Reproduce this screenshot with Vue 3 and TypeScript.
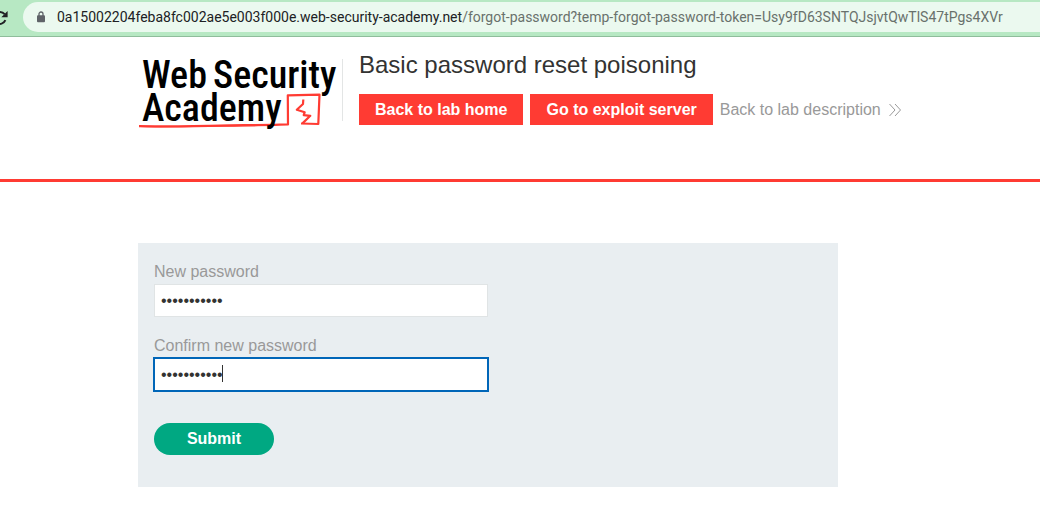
<script setup lang="ts">
import { onMounted, ref } from 'vue'

const host = '0a15002204feba8fc002ae5e003f000e.web-security-academy.net'
const path = '/forgot-password?temp-forgot-password-token=Usy9fD63SNTQJsjvtQwTlS47tPgs4XVr'

const newPassword = ref('carlos12345')
const confirmPassword = ref('carlos12345')
const confirmField = ref<HTMLInputElement | null>(null)

onMounted(() => confirmField.value?.focus())
</script>

<template>
  <div class="page">
    <div class="toolbar">
      <button class="reload" type="button" aria-label="Reload">
        <svg width="16" height="16" viewBox="0 0 16 16">
          <path d="M13.4 10.2A6 6 0 1 1 12.6 4.2" fill="none" stroke="#202124" stroke-width="2" />
          <path d="M15.6 1v6.3H9.3z" fill="#202124" />
        </svg>
      </button>
      <div class="address">
        <svg class="lock" width="8" height="12" viewBox="0 0 8 12">
          <path d="M2 5V3a2 2 0 0 1 4 0v2" fill="none" stroke="#5f6368" stroke-width="1.3" />
          <rect x="0" y="4.2" width="8" height="7" rx="1" fill="#5f6368" />
        </svg>
        <span class="url"><span class="host">{{ host }}</span>{{ path }}</span>
      </div>
    </div>

    <header class="header">
      <div class="container head">
        <a class="logo" href="#" aria-label="Web Security Academy">
          <svg width="204" height="74" viewBox="0 0 204 74">
            <text class="word" x="4" y="32">Web</text>
            <text class="word" x="75" y="32">Security</text>
            <path d="M1 70.2C30 70.8 70 69.6 106 69.2S138 68.6 150 68.4L149.800 39.3L181.500 38.6L180.300 68L163 67.500" fill="none" stroke="#ff3b33" stroke-width="2.200" stroke-linejoin="round" />
            <path d="M2 70.500C42 72 82 70 120 69.500" fill="none" stroke="#ff3b33" stroke-width="1.200" />
            <path d="M165.300 43.500L165 48L158.800 53.800L166.700 56.200L165.700 59.200L172.300 59.800L164.500 67.400" fill="none" stroke="#ff3b33" stroke-width="2.200" stroke-linejoin="round" />
            <text class="word" x="4" y="65">Academy</text>
          </svg>
        </a>
        <div class="info">
          <h2>Basic password reset poisoning</h2>
          <nav class="links">
            <a class="button" href="#">Back to lab home</a>
            <a class="button" href="#">Go to exploit server</a>
            <a class="back" href="#">
              Back to lab description
              <svg width="12" height="14" viewBox="0 0 12 14">
                <path d="M.5 1L6 7L.5 13M6 1L11.500 7L6 13" fill="none" stroke="#999" />
              </svg>
            </a>
          </nav>
        </div>
      </div>
    </header>

    <main class="container">
      <form class="panel" @submit.prevent>
        <label for="new-password">New password</label>
        <div class="field">
          <input id="new-password" v-model="newPassword" type="password" />
        </div>
        <label for="confirm-password">Confirm new password</label>
        <div class="field">
          <input id="confirm-password" ref="confirmField" v-model="confirmPassword" class="active" type="password" />
          <span class="caret"></span>
        </div>
        <button class="submit" type="submit">Submit</button>
      </form>
    </main>
  </div>
</template>

<style>
body {
  background: #fff;
}
</style>

<style scoped>
.page {
  font: 16px/24px "Liberation Sans", Arial, sans-serif;
  color: #333332;
  overflow: hidden;
}
.toolbar {
  display: flex;
  align-items: center;
  height: 36px;
  background: #b7e8c3;
  border-bottom: 1px solid #8fbd9b;
}
.reload {
  display: flex;
  flex: none;
  justify-content: flex-end;
  width: 8px;
  margin-right: 15px;
  padding: 0;
  border: 0;
  background: none;
}
.reload svg {
  flex: none;
}
.address {
  display: flex;
  flex: 1;
  min-width: 0;
  align-items: center;
  box-sizing: border-box;
  height: 30px;
  margin-bottom: 2px;
  padding-left: 14px;
  border-radius: 15px 0 0 15px;
  background: #ebf9ef;
  white-space: nowrap;
}
.lock {
  flex: none;
  margin-right: 12px;
}
.url {
  font: 14px/20px Roboto, sans-serif;
  color: #69716c;
}
.host {
  color: #202124;
}
.container {
  box-sizing: border-box;
  max-width: 764px;
  margin: 0 auto;
}
.header {
  padding: 14px 0 54px;
  border-bottom: 3px solid #ff3b33;
}
.head {
  display: flex;
  align-items: flex-start;
}
.logo {
  flex: none;
  height: 62px;
  margin-top: 8px;
  border-right: 1px solid #e3e5e5;
}
.logo svg {
  display: block;
  margin-top: -3px;
  overflow: visible;
}
.word {
  font: 500 38px "Roboto Condensed", Roboto, sans-serif;
  fill: #000;
}
.info {
  margin-left: 16px;
}
h2 {
  margin: 0 0 15px;
  font-size: 24px;
  font-weight: 400;
  line-height: 28px;
}
.links {
  display: flex;
  gap: 7px;
  white-space: nowrap;
}
.links a {
  line-height: 31px;
  text-decoration: none;
}
.button {
  padding: 0 16px;
  background: #ff3b33;
  color: #fff;
  font-weight: 700;
}
.back {
  color: #999;
}
.back svg {
  margin-left: 4px;
  vertical-align: -2px;
}
.panel {
  box-sizing: border-box;
  max-width: 700px;
  margin-top: 61px;
  padding: 17px 16px 32px;
  background: #e9eef1;
}
label {
  display: block;
  color: #999;
}
.field {
  position: relative;
  width: 334px;
  max-width: 100%;
  margin-bottom: 17px;
}
input {
  display: block;
  box-sizing: border-box;
  width: 100%;
  height: 33px;
  padding: 0 6px;
  border: 1px solid #e0e4e5;
  background: #fff;
  color: #333332;
  font: 16px "Liberation Sans", Arial, sans-serif;
  outline: none;
  caret-color: transparent;
}
input.active {
  outline: 2px solid #0066b8;
  outline-offset: -1px;
}
.caret {
  position: absolute;
  top: 7px;
  left: 68px;
  width: 1px;
  height: 17px;
  background: #333332;
}
.submit {
  display: block;
  width: 120px;
  height: 32px;
  margin-top: 32px;
  padding: 0;
  border: 0;
  border-radius: 16px;
  background: #00a882;
  color: #fff;
  font: 700 16px "Liberation Sans", Arial, sans-serif;
}
</style>
